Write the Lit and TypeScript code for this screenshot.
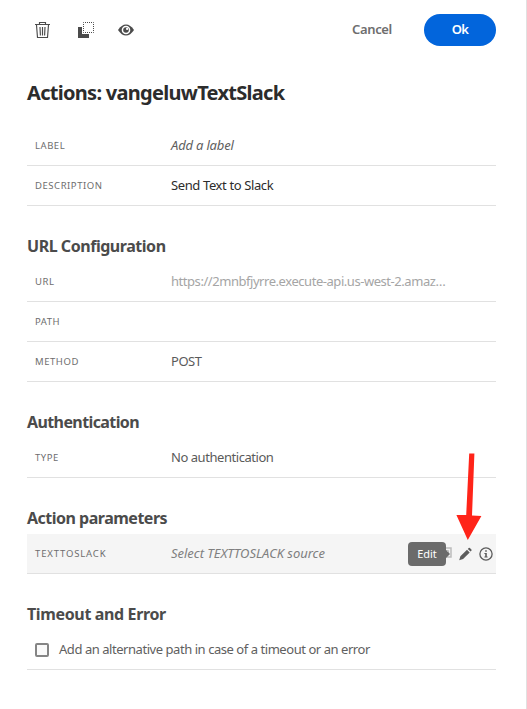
import { LitElement, html, css, nothing } from "lit";
import { customElement } from "lit/decorators.js";
import { classMap } from "lit/directives/class-map.js";

interface Row { label: string; value?: string; cls?: string; edit?: boolean }
interface Section { title: string; cls: string; rows: Row[] }

const sections: Section[] = [
  { title: "URL Configuration", cls: "h-url", rows: [
    { label: "URL", value: "https://2mnbfjyrre.execute-api.us-west-2.amaz…", cls: "muted" },
    { label: "PATH" },
    { label: "METHOD", value: "POST", cls: "plain" },
  ] },
  { title: "Authentication", cls: "h-auth", rows: [{ label: "TYPE", value: "No authentication", cls: "plain" }] },
  { title: "Action parameters", cls: "h-params", rows: [
    { label: "TEXTTOSLACK", value: "Select TEXTTOSLACK source", cls: "source", edit: true },
  ] },
];

@customElement("app-root")
export class AppRoot extends LitElement {
  static styles = css`
    :host { display: block; }
    * { box-sizing: border-box; }
    .panel {
      position: relative; width: 527px; height: 709px; overflow: hidden; background: #fff;
      border-right: 1px solid #e1e1e1; padding: 14px 30px 0 27px;
      font-family: "Noto Sans", "Open Sans", sans-serif; color: #4b4b4b; font-size: 13px;
    }
    .bar { display: flex; align-items: center; height: 32px; }
    .tools { display: flex; gap: 24px; padding-left: 6px; flex: 1; }
    svg { display: block; overflow: visible; }
    button { font: inherit; border: 0; background: none; padding: 0 0 2px; margin: 0; }
    .cancel { color: #6e6e6e; font-weight: 600; letter-spacing: -0.35px; margin-right: 32px; width: 40px; white-space: nowrap; }
    .ok { width: 72px; height: 32px; border-radius: 16px; background: #0265dc; color: #fff; font-weight: 600; letter-spacing: -0.8px; }
    h1 { margin: 31px 0 17px; font-size: 20px; line-height: 32px; font-weight: 700; color: #2c2c2c; letter-spacing: -0.71px; white-space: nowrap; }
    h2 { margin: 24px 0 0; font-size: 16px; line-height: 32px; font-weight: 700; color: #4b4b4b; letter-spacing: -0.5px; white-space: nowrap; }
    .h-url { letter-spacing: -0.46px; }
    .h-auth { letter-spacing: -0.6px; }
    .h-time { letter-spacing: -0.36px; }
    .row { display: flex; align-items: center; height: 40px; border-bottom: 1px solid #e1e1e1; padding-left: 8px; }
    .label { width: 136px; font-size: 9.5px; letter-spacing: 0.55px; color: #6e6e6e; }
    .active .label { letter-spacing: 0.85px; }
    .value { white-space: nowrap; letter-spacing: -0.45px; flex: 1; padding-bottom: 2px; }
    .strong { color: #2c2c2c; letter-spacing: -0.38px; }
    .muted { color: #a5a5a5; }
    .italic { font-style: italic; color: #5e5e5e; letter-spacing: -0.18px; }
    .source { font-style: italic; color: #808080; letter-spacing: -0.03px; }
    .plain { color: #5a5a5a; }
    .check { color: #606060; }
    .active { background: #f5f5f5; }
    .actions { position: relative; display: flex; align-items: center; gap: 7px; padding-right: 3px; }
    .tip {
      position: absolute; right: 50px; top: -5px; width: 38px; height: 24px; border-radius: 4px;
      background: #6b6b6b; color: #fff; font-size: 11px; line-height: 23px; text-align: center;
    }
    .tip::after { content: ""; position: absolute; left: 38px; top: 8px; border: 4px solid transparent; border-left-color: #6b6b6b; border-right: 0; }
    .box { width: 14px; height: 14px; border: 2px solid #858585; border-radius: 2px; background: #fafafa; margin-right: 10px; }
    .arrow { position: absolute; left: 450px; top: 448px; }
  `;

  private row(r: Row) {
    return html`<div class=${classMap({ row: true, active: !!r.edit })}>
      <span class="label">${r.label}</span>
      <span class="value ${r.cls ?? ""}">${r.value ?? nothing}</span>
      ${r.edit ? this.actions() : nothing}
    </div>`;
  }

  private actions() {
    return html`<div class="actions">
      <svg width="9" height="14" viewBox="0 0 9 14"><path d="M0 1h8v9H0" fill="#f0f0f0" stroke="#bcbcbc" stroke-width="1.5"/><path d="M2 3.5h3.5V7" fill="none" stroke="#bcbcbc"/></svg>
      <svg width="13" height="14" viewBox="0 0 13 14" fill="#5c5c5c"><path d="M.2 13.2l1.2-4L8 2.7l2.7 2.7-6.6 6.6zM8.8 1.9l.9-.9q.6-.5 1.2 0l1.5 1.5q.5.6 0 1.2l-.9.9z"/></svg>
      <svg width="14" height="14" viewBox="0 0 14 14"><circle cx="7" cy="7" r="6.1" fill="none" stroke="#5c5c5c" stroke-width="1.3"/><path d="M6.2 3.2h1.6v1.5H6.2zM5.4 5.9h2.4v3.5h.8v1H5.4v-1h.8V6.9h-.8z" fill="#5c5c5c"/></svg>
      <span class="tip">Edit</span>
    </div>`;
  }

  render() {
    return html`<main class="panel">
      <div class="bar">
        <div class="tools">
          <svg width="18" height="18" viewBox="0 0 18 18" fill="none" stroke="#4b4b4b" stroke-width="1.15"><path d="M2 3.5h15M6.5 3V1.5h6V3M3.5 4l1 12.5h10l1-12.5M7 6l.4 8.5M9.5 6v8.5M12 6l-.4 8.5"/></svg>
          <svg width="18" height="18" viewBox="0 0 18 18"><path d="M3 6h4v7h7v4H3z" fill="#4b4b4b"/><path d="M8.5 1.5h10v10h-10z" fill="none" stroke="#4b4b4b" stroke-dasharray="1 1" stroke-dashoffset=".5"/></svg>
          <svg width="18" height="18" viewBox="0 0 18 18"><path d="M1 9q3.6-5.5 8-5.5t8 5.5q-3.6 5.5-8 5.5T1 9z" fill="#4b4b4b"/><circle cx="9" cy="9" r="4.3" fill="#fff"/><circle cx="9" cy="9" r="2.8" fill="#4b4b4b"/><circle cx="10.1" cy="7.9" r="1.1" fill="#fff"/></svg>
        </div>
        <button class="cancel">Cancel</button>
        <button class="ok">Ok</button>
      </div>
      <h1>Actions: vangeluwTextSlack</h1>
      ${this.row({ label: "LABEL", value: "Add a label", cls: "italic" })}
      ${this.row({ label: "DESCRIPTION", value: "Send Text to Slack", cls: "strong" })}
      ${sections.map((s) => html`<h2 class=${s.cls}>${s.title}</h2>${s.rows.map((r) => this.row(r))}`)}
      <h2 class="h-time">Timeout and Error</h2>
      <div class="row"><span class="box"></span><span class="value check">Add an alternative path in case of a timeout or an error</span></div>
      <svg class="arrow" width="40" height="96" viewBox="0 0 40 96" fill="#ff2419"><path d="M19.2 5.5h5.2L22 67.5l9.4.5L17.8 92 6.4 67h9.8z"/></svg>
    </main>`;
  }
}
